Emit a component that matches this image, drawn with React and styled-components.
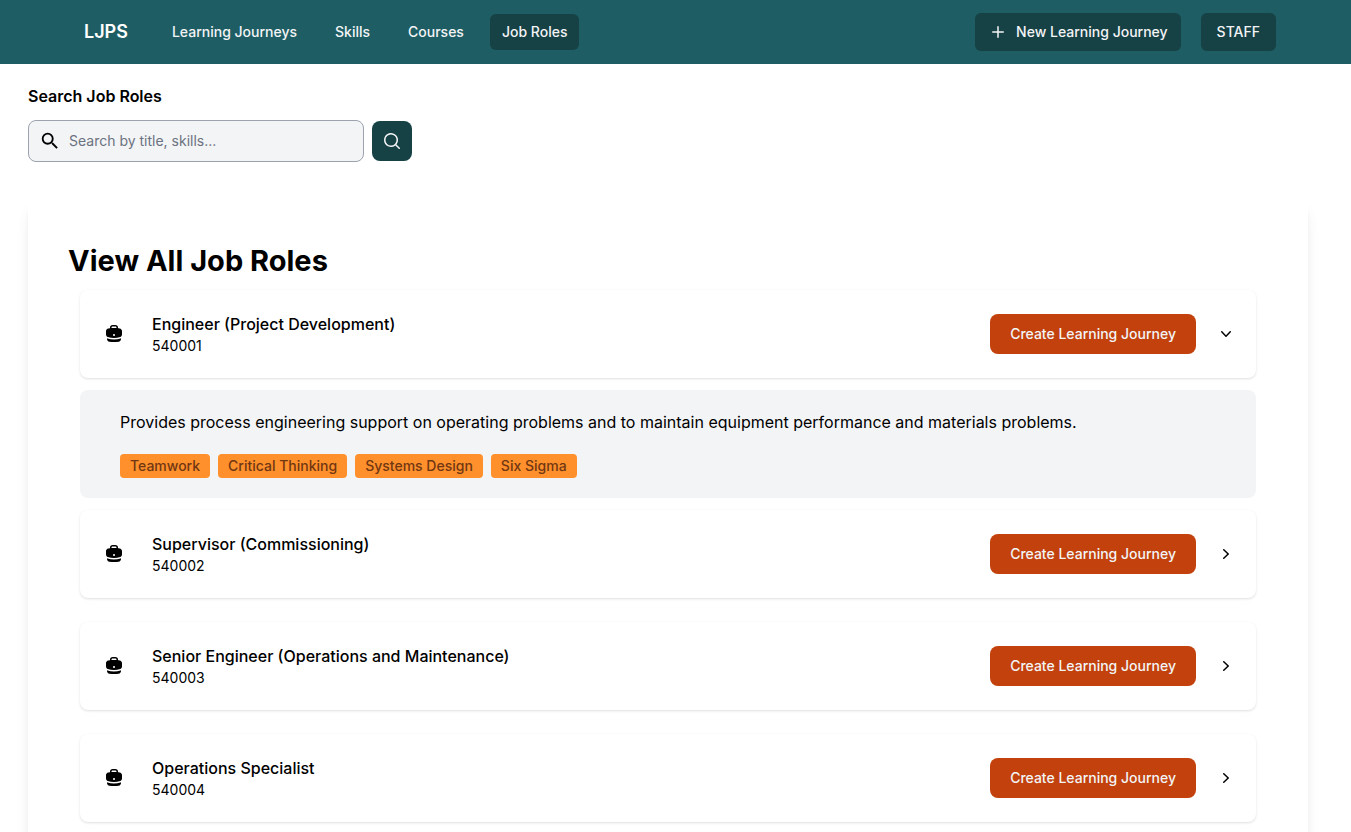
import React, { useState } from "react";
import styled, { createGlobalStyle } from "styled-components";
import { MdSearch } from "react-icons/md";

const GlobalStyle = createGlobalStyle`
  *, *::before, *::after { box-sizing: border-box; }
  body {
    margin: 0;
    background: #fff;
    color: #000;
    font-family: Inter, "Liberation Sans", sans-serif;
    font-size: 16px;
    line-height: 24px;
  }
  h1, h2, p, ul { margin: 0; padding: 0; }
  button, input { font-family: inherit; }
`;

const ICONS = {
  plus: [
    "M10.75 4.75a.75.75 0 00-1.5 0v4.5h-4.5a.75.75 0 000 1.5h4.5v4.5a.75.75 0 001.5 0v-4.5h4.5a.75.75 0 000-1.5h-4.5v-4.5z",
  ],
  search: [
    "M9 3.5a5.5 5.5 0 100 11 5.5 5.5 0 000-11zM2 9a7 7 0 1112.452 4.391l3.328 3.329a.75.75 0 11-1.06 1.06l-3.329-3.328A7 7 0 012 9z",
  ],
  right: [
    "M7.21 14.77a.75.75 0 01.02-1.06L11.168 10 7.23 6.29a.75.75 0 111.04-1.08l4.5 4.25a.75.75 0 010 1.08l-4.5 4.25a.75.75 0 01-1.06-.02z",
  ],
  down: [
    "M5.23 7.21a.75.75 0 011.06.02L10 11.168l3.71-3.938a.75.75 0 111.08 1.04l-4.25 4.5a.75.75 0 01-1.08 0l-4.25-4.5a.75.75 0 01.02-1.06z",
  ],
  briefcase: [
    "M6 3.75A2.75 2.75 0 018.75 1h2.5A2.75 2.75 0 0114 3.75v.443c.572.055 1.14.122 1.706.2C17.053 4.582 18 5.75 18 7.07v3.469c0 1.126-.694 2.191-1.83 2.54-1.952.599-4.024.921-6.17.921s-4.219-.322-6.17-.921C2.694 12.73 2 11.665 2 10.539V7.07c0-1.321.947-2.489 2.294-2.676A41.047 41.047 0 016 4.193V3.75zm6.5 0v.325a41.622 41.622 0 00-5 0V3.75c0-.69.56-1.25 1.25-1.25h2.5c.69 0 1.25.56 1.25 1.25zM10 10a1 1 0 00-1 1v.01a1 1 0 001 1h.01a1 1 0 001-1V11a1 1 0 00-1-1H10z",
    "M3 15.055v-.684c.126.053.255.1.39.142 2.092.642 4.313.987 6.61.987 2.297 0 4.518-.345 6.61-.987.135-.041.264-.089.39-.142v.684c0 1.347-.985 2.53-2.363 2.686a41.454 41.454 0 01-9.274 0C3.985 17.585 3 16.402 3 15.055z",
  ],
};

const IconSvg = styled.svg`
  flex: none;
  width: 20px;
  height: 20px;
  fill: currentColor;
`;

function Icon({ name }) {
  return (
    <IconSvg viewBox="0 0 20 20" aria-hidden="true">
      {ICONS[name].map((d) => (
        <path key={d} d={d} fillRule="evenodd" clipRule="evenodd" />
      ))}
    </IconSvg>
  );
}

const Header = styled.header`
  display: flex;
  align-items: center;
  justify-content: space-between;
  height: 64px;
  padding: 0 75px 0 84px;
  background: #1d5d63;
`;

const Nav = styled.nav`
  display: flex;
  align-items: center;
  gap: 14px;
`;

const Brand = styled.a`
  margin-right: 18px;
  color: #fff;
  font-size: 18px;
  font-weight: 600;
  line-height: 28px;
  text-decoration: none;
`;

const NavLink = styled.a`
  padding: 8px 12px;
  border-radius: 6px;
  background: ${({ $active }) => ($active ? "#164145" : "transparent")};
  color: #f3f4f6;
  font-size: 14px;
  font-weight: 500;
  line-height: 20px;
  text-decoration: none;
`;

const Actions = styled.div`
  display: flex;
  align-items: center;
  gap: 20px;
`;

const Button = styled.button`
  display: inline-flex;
  align-items: center;
  justify-content: center;
  border: 0;
  color: #f3f4f6;
  font-size: 14px;
  font-weight: 500;
  line-height: 20px;
  cursor: pointer;
`;

const HeaderButton = styled(Button)`
  gap: 8px;
  height: 38px;
  padding: ${({ $withIcon }) => ($withIcon ? "0 13px" : "0 16px")};
  border-radius: 6px;
  background: #164145;
`;

const Main = styled.main`
  padding: 20px 43px 0 28px;
`;

const SearchForm = styled.form`
  display: flex;
  flex-direction: column;
  gap: 12px;
  margin-bottom: 38px;
`;

const SearchLabel = styled.label`
  font-weight: 600;
`;

const SearchRow = styled.div`
  display: flex;
  align-items: center;
  gap: 8px;
`;

const SearchField = styled.div`
  display: flex;
  align-items: center;
  gap: 8px;
  width: 336px;
  height: 42px;
  padding: 0 10px;
  border: 1px solid #9ca3af;
  border-radius: 8px;
  background: #f3f4f6;
`;

const SearchInput = styled.input`
  flex: 1;
  min-width: 0;
  padding: 0;
  border: 0;
  outline: 0;
  background: transparent;
  font-size: 14px;
  line-height: 20px;
  &::placeholder { color: #6b7280; opacity: 1; }
`;

const SearchButton = styled(Button)`
  width: 40px;
  height: 40px;
  padding: 0;
  border-radius: 8px;
  background: #164145;
`;

const Panel = styled.section`
  padding: 40px 40px 24px;
  border-radius: 8px;
  box-shadow: 0 10px 15px -3px rgba(0, 0, 0, 0.1), 0 4px 6px -4px rgba(0, 0, 0, 0.1);
`;

const Title = styled.h1`
  margin-bottom: 8px;
  font-size: 29px;
  font-weight: 700;
  line-height: 42px;
`;

const RoleList = styled.ul`
  display: flex;
  flex-direction: column;
  padding: 0 12px;
  list-style: none;
`;

const RoleItem = styled.li`
  display: flex;
  flex-direction: column;
  gap: 12px;
  margin-bottom: ${({ $open }) => ($open ? "12px" : "24px")};
`;

const RoleCard = styled.div`
  display: flex;
  align-items: center;
  height: 88px;
  padding: 0 20px 0 24px;
  border-radius: 8px;
  background: #fff;
  box-shadow: 0 1px 3px rgba(0, 0, 0, 0.1), 0 1px 2px -1px rgba(0, 0, 0, 0.1);
`;

const RoleText = styled.div`
  flex: 1;
  margin-left: 28px;
`;

const RoleName = styled.h2`
  font-size: 16px;
  font-weight: 500;
  line-height: 24px;
`;

const RoleCode = styled.p`
  font-size: 14px;
  line-height: 20px;
`;

const CreateButton = styled(Button)`
  height: 40px;
  padding: 0 20px;
  border-radius: 8px;
  background: #c2410c;
`;

const ToggleButton = styled(Button)`
  width: 20px;
  height: 20px;
  margin-left: 20px;
  padding: 0;
  background: transparent;
  color: #000;
`;

const Details = styled.div`
  display: flex;
  flex-direction: column;
  gap: 20px;
  padding: 20px 40px;
  border-radius: 8px;
  background: #f3f4f6;
`;

const Tags = styled.div`
  display: flex;
  flex-wrap: wrap;
  gap: 8px;
`;

const Tag = styled.span`
  padding: 2px 10px;
  border-radius: 4px;
  background: #ff902b;
  color: #713713;
  font-size: 14px;
  font-weight: 500;
  line-height: 20px;
`;

const NAV = ["Learning Journeys", "Skills", "Courses", "Job Roles"];

const ROLES = [
  {
    code: "540001",
    name: "Engineer (Project Development)",
    description:
      "Provides process engineering support on operating problems and to maintain equipment performance and materials problems.",
    skills: ["Teamwork", "Critical Thinking", "Systems Design", "Six Sigma"],
  },
  { code: "540002", name: "Supervisor (Commissioning)" },
  { code: "540003", name: "Senior Engineer (Operations and Maintenance)" },
  { code: "540004", name: "Operations Specialist" },
];

function Role({ role, open, onToggle }) {
  const expanded = open && role.description;
  return (
    <RoleItem $open={open}>
      <RoleCard>
        <Icon name="briefcase" />
        <RoleText>
          <RoleName>{role.name}</RoleName>
          <RoleCode>{role.code}</RoleCode>
        </RoleText>
        <CreateButton type="button">Create Learning Journey</CreateButton>
        <ToggleButton type="button" aria-label="Toggle details" aria-expanded={open} onClick={onToggle}>
          <Icon name={open ? "down" : "right"} />
        </ToggleButton>
      </RoleCard>
      {expanded && (
        <Details>
          <p>{role.description}</p>
          <Tags>
            {role.skills.map((skill) => (
              <Tag key={skill}>{skill}</Tag>
            ))}
          </Tags>
        </Details>
      )}
    </RoleItem>
  );
}

export default function App() {
  const [openCode, setOpenCode] = useState("540001");
  return (
    <>
      <GlobalStyle />
      <Header>
        <Nav>
          <Brand href="#">LJPS</Brand>
          {NAV.map((item) => (
            <NavLink key={item} href="#" $active={item === "Job Roles"}>
              {item}
            </NavLink>
          ))}
        </Nav>
        <Actions>
          <HeaderButton type="button" $withIcon>
            <Icon name="plus" />
            New Learning Journey
          </HeaderButton>
          <HeaderButton type="button">STAFF</HeaderButton>
        </Actions>
      </Header>
      <Main>
        <SearchForm onSubmit={(event) => event.preventDefault()}>
          <SearchLabel htmlFor="role-search">Search Job Roles</SearchLabel>
          <SearchRow>
            <SearchField>
              <MdSearch size={22} aria-hidden="true" />
              <SearchInput id="role-search" type="text" placeholder="Search by title, skills..." />
            </SearchField>
            <SearchButton type="submit" aria-label="Search">
              <Icon name="search" />
            </SearchButton>
          </SearchRow>
        </SearchForm>
        <Panel>
          <Title>View All Job Roles</Title>
          <RoleList>
            {ROLES.map((role) => (
              <Role
                key={role.code}
                role={role}
                open={openCode === role.code}
                onToggle={() => setOpenCode(openCode === role.code ? null : role.code)}
              />
            ))}
          </RoleList>
        </Panel>
      </Main>
    </>
  );
}
